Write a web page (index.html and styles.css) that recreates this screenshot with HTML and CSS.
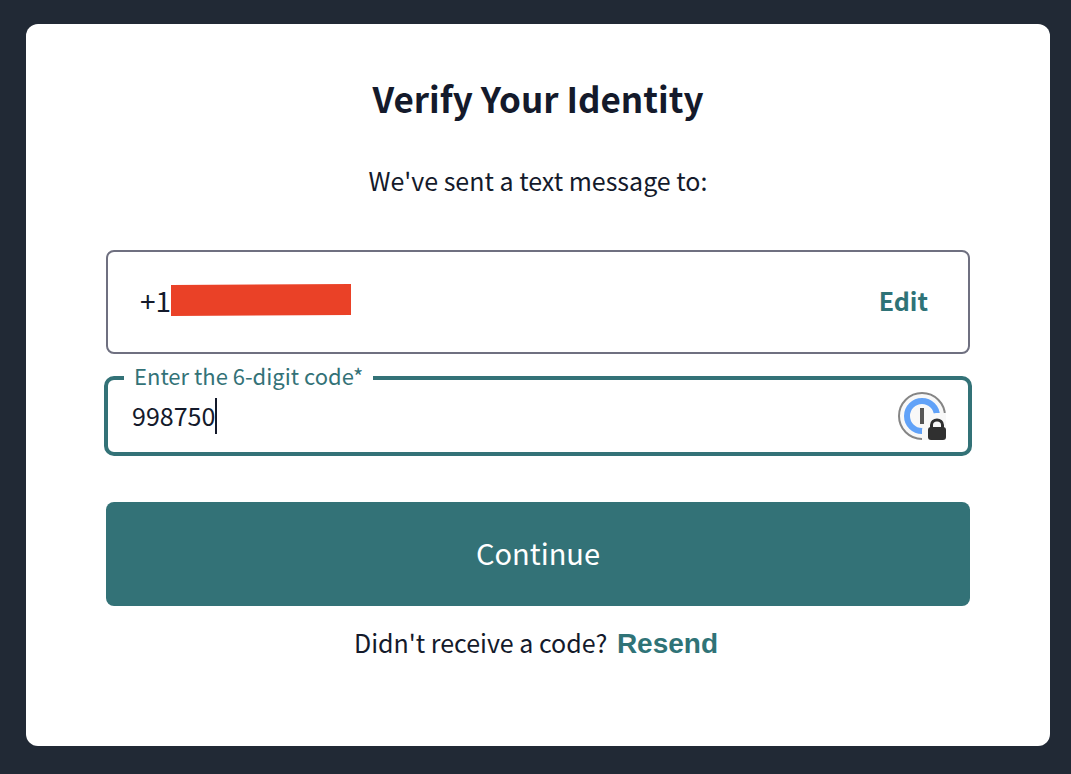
FILE: index.html
```html
<!DOCTYPE html>
<html lang="en">
<head>
<meta charset="utf-8">
<meta name="viewport" content="width=device-width, initial-scale=1">
<title>Verify Your Identity</title>
<link rel="stylesheet" href="styles.css">
</head>
<body>
<main class="card">
  <h1 class="title">Verify Your Identity</h1>
  <p class="subtitle">We've sent a text message to:</p>
  <form class="form">
    <div class="phone">
      <span class="phone-number">+1</span>
      <svg class="redaction" viewBox="0 0 180 34" aria-hidden="true"><path d="M0 2 180 1V32L0 33Z" fill="#ea4127"/></svg>
      <a class="link edit" href="#">Edit</a>
    </div>
    <fieldset class="code">
      <legend class="code-legend"><label for="code">Enter the 6-digit code*</label></legend>
      <div class="code-row">
        <div class="code-entry">
          <input class="code-input" id="code" type="text" inputmode="numeric" value="998750">
          <span class="caret"></span>
        </div>
        <svg class="manager-icon" viewBox="0 0 48 48" aria-hidden="true">
          <circle cx="24" cy="24" r="23" fill="#f8f8f8" stroke="#858585" stroke-width="2"/>
          <circle cx="24" cy="24" r="15" fill="#f8f8f8" stroke="#61a2f8" stroke-width="6"/>
          <path d="M22 16h4v16h-4z" fill="#555"/>
          <path d="M24 48V38q0-4 4-5l2-6q2-6 8-6h10v27z" fill="#f8f8f8"/>
          <path d="M33.500 38v-5a5.500 5 0 0 1 11 0v5" fill="none" stroke="#303030" stroke-width="3"/>
          <rect x="30" y="35" width="18" height="13" rx="3" fill="#303030"/>
        </svg>
      </div>
    </fieldset>
    <button class="continue" type="submit">Continue</button>
  </form>
  <p class="resend-row">Didn't receive a code? <button class="link resend" type="button">Resend</button></p>
</main>
</body>
</html>
```
FILE: styles.css
```css
* {
  box-sizing: border-box;
}

body {
  margin: 0;
  min-height: 100vh;
  padding: 24px 21px 28px 26px;
  background: #212935;
  color: #141a2b;
  font-family: "Noto Sans CJK SC", "Noto Sans", sans-serif;
  font-size: 25px;
  line-height: 36px;
}

.card {
  padding: 48px 80px 84px;
  background: #fff;
  border-radius: 12px;
}

.title {
  margin: 0 0 38px;
  font-size: 35px;
  font-weight: 700;
  line-height: 52px;
  text-align: center;
}

.subtitle {
  margin: 0 0 52px;
  text-align: center;
}

.phone {
  display: flex;
  align-items: center;
  height: 104px;
  padding: 0 40px 4px 32px;
  border: 2px solid #6f7080;
  border-radius: 8px;
}

.phone-number {
  font-size: 28px;
}

.redaction {
  width: 180px;
  height: 34px;
}

.edit {
  margin-left: auto;
}

.link {
  color: #2f7377;
  font-weight: 700;
  text-decoration: none;
}

.code {
  min-width: 0;
  margin: 10px -2px 46px;
  padding: 0 16px 12px;
  border: 4px solid #337277;
  border-radius: 10px;
}

.code-legend {
  padding: 0 10px 6px;
  color: #337277;
  font-size: 22px;
  line-height: 22px;
}

.code-row {
  display: flex;
  align-items: center;
  height: 48px;
  padding: 0 6px 0 8px;
}

.code-entry {
  position: relative;
  flex: 1;
}

.code-input {
  display: block;
  width: 100%;
  height: 36px;
  padding: 0 0 2px;
  border: 0;
  outline: 0;
  background: transparent;
  color: inherit;
  font: inherit;
}

.caret {
  position: absolute;
  top: 0;
  left: 83px;
  width: 2px;
  height: 36px;
  background: #141a2b;
}

.manager-icon {
  width: 48px;
  height: 48px;
}

.continue {
  display: block;
  width: 100%;
  height: 104px;
  padding: 0 0 4px;
  border: 0;
  border-radius: 8px;
  background: #337277;
  color: #fff;
  font-family: inherit;
  font-size: 29px;
  font-weight: 400;
}

.resend-row {
  margin: 18px 0 0;
  text-align: center;
}

.resend {
  padding: 0 4px;
  border: 0;
  background: none;
  font-family: "Liberation Sans", Arial, sans-serif;
  font-size: 28px;
  line-height: 36px;
}
```
